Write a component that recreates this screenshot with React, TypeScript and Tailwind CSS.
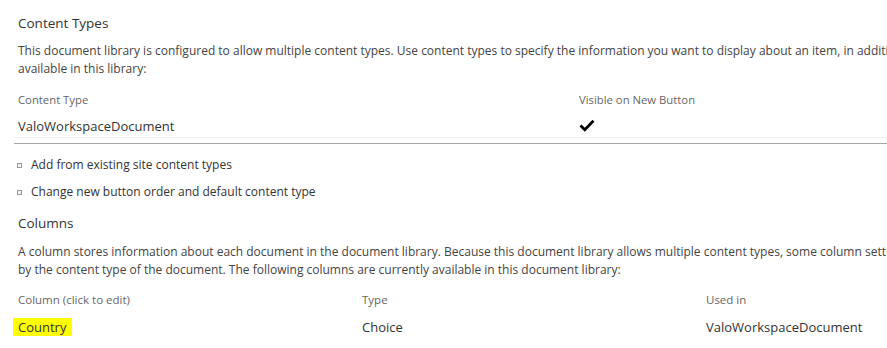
const font = { fontFamily: '"Open Sans", "Noto Sans", Arial, sans-serif' };

const Check = () => (
  <svg width="16" height="13" viewBox="0 0 16 13" className="block">
    <path d="M1.5 6.5 L5.8 10.8 L14.5 1.8" fill="none" stroke="#000" strokeWidth="2.8" />
  </svg>
);

const Bullet = () => <span className="inline-block w-[5px] h-[5px] border border-[#999] bg-[#f2f2f2] mr-[9px] shrink-0" />;

export default function App() {
  return (
    <div className="w-[887px] h-[348px] overflow-hidden bg-white text-[#333]" style={font}>
      <div className="w-[1100px] pt-[13px]">
        {/* Content types section */}
        <h2 className="pl-[18px] text-[13.5px] leading-[20px] font-normal">Content Types</h2>
        <p className="pl-[18px] mt-[9px] text-[12px] leading-[18px] text-[#444] whitespace-nowrap">
          This document library is configured to allow multiple content types. Use content types to specify the information you want to display about an item, in addition to its policies, workflows, or other behavior. The following content types are currently
          <br />
          available in this library:
        </p>

        <div className="w-[873px] ml-[14px] mt-[13px]">
          <div className="flex text-[11.3px] leading-[18px] text-[#666]">
            <div className="w-[565px] pl-[4px]">Content Type</div>
            <div>Visible on New Button</div>
          </div>
          <div className="flex items-center h-[22px] mt-[7px] text-[13px] border-b border-[#f0f0f0]">
            <div className="w-[565px] pl-[4px]">ValoWorkspaceDocument</div>
            <div className="-mt-[2px]"><Check /></div>
          </div>
          <div className="h-px bg-[#a6a6a6] mt-[5px]" />
        </div>

        <ul className="pl-[17px] mt-[12px] text-[12px] leading-[18px] text-[#333]">
          <li className="flex items-center">
            <Bullet />
            Add from existing site content types
          </li>
          <li className="flex items-center mt-[9px]">
            <Bullet />
            Change new button order and default content type
          </li>
        </ul>

        {/* Columns section */}
        <h2 className="pl-[18px] mt-[12px] text-[13.5px] leading-[20px] font-normal">Columns</h2>
        <p className="pl-[18px] mt-[10px] text-[12px] leading-[18px] text-[#444] whitespace-nowrap">
          A column stores information about each document in the document library. Because this document library allows multiple content types, some column settings, such as whether information is required or optional for a column, are now specified
          <br />
          by the content type of the document. The following columns are currently available in this document library:
        </p>

        <div className="ml-[13px] mt-[12px]">
          <div className="flex text-[11.5px] leading-[18px] text-[#666]">
            <div className="w-[349px] pl-[5px]">Column (click to edit)</div>
            <div className="w-[344px]">Type</div>
            <div>Used in</div>
          </div>
          <div className="flex text-[13px] leading-[18px] mt-[9px]">
            <div className="w-[349px]">
              <span className="bg-[#ffff00] pl-[5px] pr-[6px] py-0">Country</span>
            </div>
            <div className="w-[344px]">Choice</div>
            <div>ValoWorkspaceDocument</div>
          </div>
        </div>
      </div>
    </div>
  );
}
